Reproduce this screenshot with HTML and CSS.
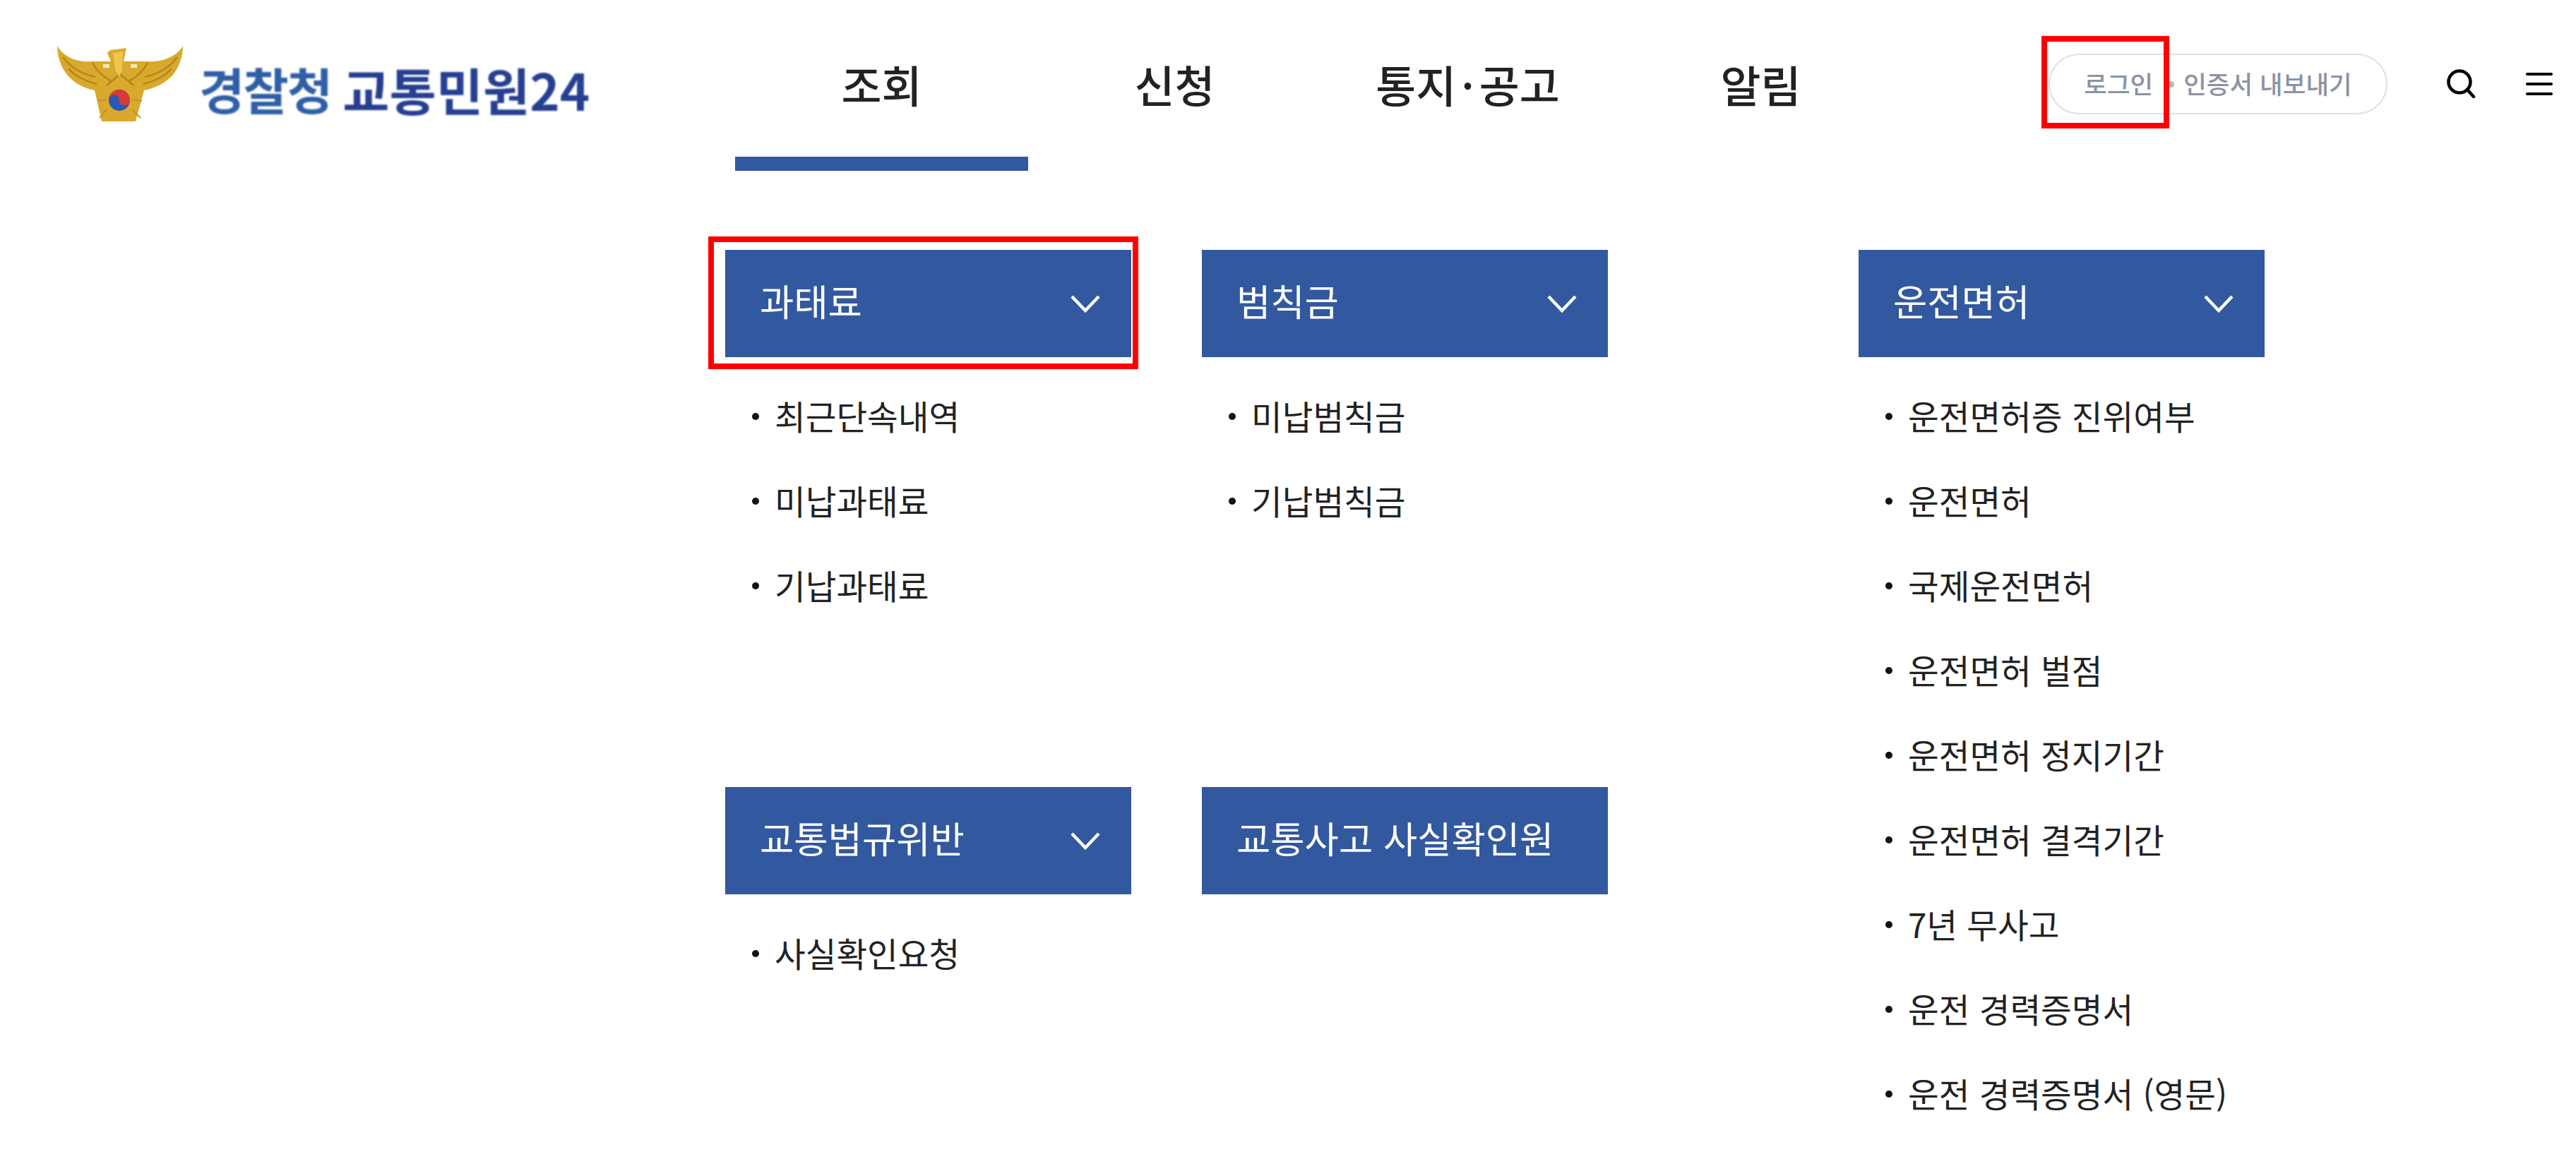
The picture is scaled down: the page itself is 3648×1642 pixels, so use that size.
FILE: index.html
```html
<!DOCTYPE html>
<html lang="ko">
<head>
    <meta charset="UTF-8">
    <meta name="viewport" content="width=device-width, initial-scale=1.0">
    <title>경찰청 교통민원24</title>
    <link rel="stylesheet" href="styles.css">
</head>
<body>
    <header>
        <a href="#" class="logo">
            <svg class="emblem" viewBox="0 0 178 108" width="178" height="108">
                <path fill="#d8a92c" d="M0 0C8 14 26 24 49 22L64 22 76 22 71 10 75 6 98 3 94 22 126 22C150 24 170 14 178 0 178 16 172 30 166 38 158 50 140 60 123 63L111 107 63 107 53 63C36 60 20 50 12 38 6 30 0 16 0 0Z"/>
                <path fill="none" stroke="#b5861c" stroke-width="2.5" d="M8 16C20 32 36 40 54 44M16 32C26 44 40 50 56 54M170 16C158 32 142 40 124 44M162 32C152 44 138 50 122 54M50 24C56 36 66 44 76 50M128 24C122 36 112 44 102 50M89 40L70 56M89 40L108 56"/>
                <path fill="#fff" opacity=".75" d="M65 26H74V31H65ZM104 26H113V31H104Z"/>
                <path fill="#ecc64f" d="M79 10L93 8 92 34 88 44 82 34Z"/>
                <path fill="none" stroke="#c4951f" stroke-width="2" d="M60 102L70 90M118 102L106 90M58 78L70 76M120 78L106 76"/>
                <circle cx="88" cy="77" r="15" fill="#2a58b4"/>
                <path fill="#d83a35" d="M73 77A15 15 0 0 1 103 77 7.5 7.5 0 0 1 88 77 7.5 7.5 0 0 0 73 77Z"/>
            </svg>
            <span class="logo-text"><span class="logo-org">경찰청</span><span class="logo-name">교통민원24</span></span>
        </a>
        <nav class="gnb">
            <a href="#" class="gnb-item active">조회</a>
            <a href="#" class="gnb-item">신청</a>
            <a href="#" class="gnb-item">통지<span class="gnb-dot">·</span>공고</a>
            <a href="#" class="gnb-item">알림</a>
        </nav>
        <div class="utils">
            <div class="login-pill">
                <a href="#">로그인</a>
                <i class="dot"></i>
                <a href="#">인증서 내보내기</a>
            </div>
            <a href="#" class="icon-search">
                <svg viewBox="0 0 41 41" width="41" height="41">
                    <circle cx="18" cy="18" r="15.5" fill="none" stroke="#000" stroke-width="4.5"/>
                    <path d="M29 29L38 39" fill="none" stroke="#000" stroke-width="4.5" stroke-linecap="round"/>
                </svg>
            </a>
            <a href="#" class="icon-menu"><span></span><span></span><span></span></a>
        </div>
    </header>

    <main class="menu-grid">
        <section class="group">
            <h2 class="group-title">과태료<svg class="chev" viewBox="0 0 42 25" width="42" height="25"><path d="M2 2L21 22 40 2"/></svg></h2>
            <ul>
                <li><a href="#">최근단속내역</a></li>
                <li><a href="#">미납과태료</a></li>
                <li><a href="#">기납과태료</a></li>
            </ul>
        </section>
        <section class="group">
            <h2 class="group-title">범칙금<svg class="chev" viewBox="0 0 42 25" width="42" height="25"><path d="M2 2L21 22 40 2"/></svg></h2>
            <ul>
                <li><a href="#">미납범칙금</a></li>
                <li><a href="#">기납범칙금</a></li>
            </ul>
        </section>
        <section class="group group-tall">
            <h2 class="group-title">운전면허<svg class="chev" viewBox="0 0 42 25" width="42" height="25"><path d="M2 2L21 22 40 2"/></svg></h2>
            <ul>
                <li><a href="#">운전면허증 진위여부</a></li>
                <li><a href="#">운전면허</a></li>
                <li><a href="#">국제운전면허</a></li>
                <li><a href="#">운전면허 벌점</a></li>
                <li><a href="#">운전면허 정지기간</a></li>
                <li><a href="#">운전면허 결격기간</a></li>
                <li><a href="#">7년 무사고</a></li>
                <li><a href="#">운전 경력증명서</a></li>
                <li><a href="#">운전 경력증명서 (영문)</a></li>
            </ul>
        </section>
        <section class="group">
            <h2 class="group-title">교통법규위반<svg class="chev" viewBox="0 0 42 25" width="42" height="25"><path d="M2 2L21 22 40 2"/></svg></h2>
            <ul>
                <li><a href="#">사실확인요청</a></li>
            </ul>
        </section>
        <section class="group">
            <h2 class="group-title">교통사고 사실확인원</h2>
        </section>
    </main>

    <!-- red guide boxes drawn over the page -->
    <div class="mark mark-login"></div>
    <div class="mark mark-first"></div>
</body>
</html>
```

FILE: styles.css
```css
* {
    box-sizing: border-box;
}
html, body {
    margin: 0;
    padding: 0;
    background-color: #fff;
}
body {
    position: relative;
    height: 1642px;
    overflow: hidden;
    font-family: "Noto Sans CJK KR", "Noto Sans", sans-serif;
    color: #222;
}
a {
    color: inherit;
    text-decoration: none;
}

/* header */
header {
    display: flex;
    align-items: stretch;
    height: 242px;
}
.logo {
    flex: none;
    display: flex;
    align-items: flex-start;
    gap: 23px;
    width: 1041px;
    padding: 65px 0 0 81px;
}
.emblem {
    flex: none;
    filter: blur(0.7px);
}
.logo-text {
    display: flex;
    align-items: center;
    gap: 16px;
    height: 90px;
    margin-top: 15px;
    font-weight: 700;
    white-space: nowrap;
    filter: blur(0.8px);
}
.logo-org {
    color: #2f5fa8;
    font-size: 70px;
    letter-spacing: -2px;
}
.logo-name {
    color: #273f92;
    font-size: 72px;
}
.gnb {
    flex: none;
    display: grid;
    grid-template-columns: repeat(4, 415px);
}
.gnb-item {
    display: flex;
    justify-content: center;
    padding-top: 73px;
    font-size: 62px;
    font-weight: 500;
    line-height: 92px;
}
.gnb-dot {
    margin: 0 7px;
}
.gnb-item.active {
    border-bottom: 20px solid #32589f;
}
.utils {
    flex: none;
    display: flex;
    align-items: flex-start;
    margin-left: 200px;
}
.login-pill {
    display: flex;
    align-items: center;
    justify-content: center;
    width: 480px;
    height: 86px;
    margin-top: 76px;
    padding-bottom: 4px;
    border: 2px solid #dde0ea;
    border-radius: 43px;
    font-size: 35.5px;
    font-weight: 500;
    color: #8c92a5;
}
.dot {
    width: 9px;
    height: 9px;
    margin: 4px 13px 0 21px;
    border-radius: 50%;
    background-color: #b0b5c7;
}
.icon-search {
    display: block;
    width: 41px;
    height: 41px;
    margin: 98px 0 0 84px;
}
.icon-search svg {
    display: block;
}
.icon-menu {
    display: flex;
    flex-direction: column;
    gap: 10px;
    width: 38px;
    margin: 103px 0 0 71px;
}
.icon-menu span {
    height: 4px;
    border-radius: 2px;
    background-color: #000;
}

/* menu columns */
.menu-grid {
    display: grid;
    grid-template-columns: 675px 930px 575px;
    grid-template-rows: 761px auto;
    padding: 112px 0 0 1027px;
}
.group {
    width: 575px;
}
.group-tall {
    grid-column: 3;
    grid-row: 1 / span 2;
}
.group-title {
    display: flex;
    align-items: center;
    justify-content: space-between;
    height: 152px;
    margin: 0;
    padding: 0 44px 10px 49px;
    background-color: #32589f;
    color: #fff;
    font-size: 52.5px;
    font-weight: 400;
}
.chev {
    flex: none;
    margin-top: 10px;
}
.chev path {
    fill: none;
    stroke: #fff;
    stroke-width: 4.5;
}
ul {
    margin: 0;
    padding: 22px 0 0;
    list-style: none;
}
li {
    display: flex;
    align-items: center;
    height: 120px;
    padding-left: 70px;
    font-size: 47.5px;
    position: relative;
}
li::before {
    content: "";
    position: absolute;
    left: 38px;
    top: 50%;
    width: 10px;
    height: 10px;
    margin-top: -3px;
    border-radius: 50%;
    background-color: #111;
}

/* red guide boxes */
.mark {
    position: absolute;
    border: 8px solid #f00;
}
.mark-login {
    left: 2891px;
    top: 51px;
    width: 181px;
    height: 131px;
}
.mark-first {
    left: 1003px;
    top: 335px;
    width: 609px;
    height: 188px;
}
```
